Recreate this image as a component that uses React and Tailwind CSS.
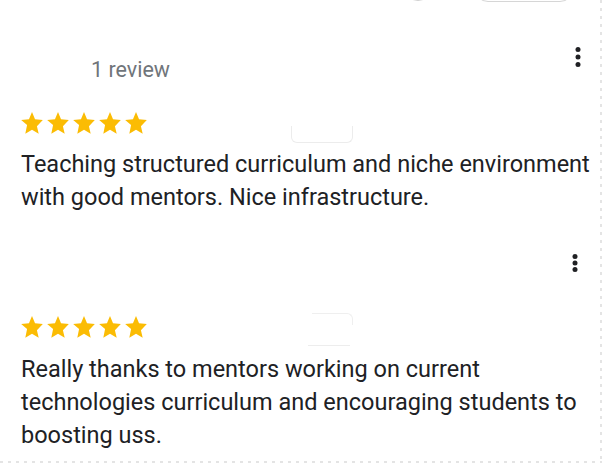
import React from "react";

const STAR = "M12 17.27L18.18 21l-1.64-7.03L22 8.24l-7.19-.61L12 1 9.19 7.63 2 8.24l5.46 4.73L5.82 21z";

function Stars() {
  return (
    <div className="flex ml-[-2px]">
      {[0, 1, 2, 3, 4].map((i) => (
        <svg key={i} width="26" height="26" viewBox="0 0 24 24">
          <path d={STAR} fill="#fbbc04" />
        </svg>
      ))}
    </div>
  );
}

function Kebab({ gap = 7.5 }) {
  const c = 12;
  return (
    <svg width="8" height="24" viewBox="0 0 8 24">
      <circle cx="4" cy={c - gap} r="2.5" fill="#202124" />
      <circle cx="4" cy={c} r="2.5" fill="#202124" />
      <circle cx="4" cy={c + gap} r="2.5" fill="#202124" />
    </svg>
  );
}

export default function App() {
  return (
    <div className="relative w-[602px] h-[463px] overflow-hidden bg-white font-['Roboto',sans-serif] text-[#202124]">
      {/* faint overlay remnants */}
      <div className="absolute left-[404px] top-[-30px] w-[28px] h-[31px] rounded-full border border-[#d0d0d0]" />
      <div className="absolute left-[474px] top-[-30px] w-[100px] h-[32px] rounded-[14px] border border-[#d6d6d6]" />
      <div className="absolute left-[291px] top-[126px] w-[62px] h-[17px] rounded-b-[6px] border-x border-b border-t-0 border-[#ececec]" />
      <div className="absolute left-[312px] top-[313px] w-[41px] h-[12px] rounded-tr-[6px] border-t border-r border-[#efefef]" />
      <div className="absolute left-[308px] top-[345px] w-[42px] h-px bg-[#ededed]" />
      <div className="absolute right-0 top-0 w-[2px] h-full bg-[repeating-linear-gradient(to_bottom,#e4e4e4_0_3px,transparent_3px_8px)]" />
      <div className="absolute left-0 bottom-0 w-full h-[2px] bg-[repeating-linear-gradient(to_right,#e4e4e4_0_3px,transparent_3px_8px)]" />

      <div className="flex flex-col pl-[21px] pr-[6px]">
        {/* review 1 */}
        <section className="flex flex-col">
          <div className="flex items-start justify-between mt-[44px]">
            <div className="ml-[70px] mt-[12px] text-[21.5px] leading-[28px] text-[#70757a]">1 review</div>
            <div className="mr-[14px] mt-[1px]">
              <Kebab gap={7.5} />
            </div>
          </div>
          <div className="mt-[27px]">
            <Stars />
          </div>
          <p className="mt-[11px] text-[23.5px] leading-[33px]">
            Teaching structured curriculum and niche environment with good mentors. Nice infrastructure.
          </p>
        </section>

        {/* review 2 */}
        <section className="flex flex-col">
          <div className="flex justify-end mt-[37px]">
            <div className="mr-[17px]">
              <Kebab gap={6.5} />
            </div>
          </div>
          <div className="mt-[40px]">
            <Stars />
          </div>
          <p className="mt-[12px] text-[23.5px] leading-[33px]">
            Really thanks to mentors working on current technologies curriculum and encouraging students to boosting uss.
          </p>
        </section>
      </div>
    </div>
  );
}
